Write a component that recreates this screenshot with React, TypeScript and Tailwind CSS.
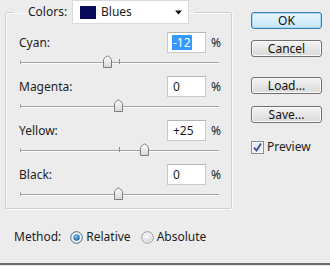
const channels = [
  { name: 'Cyan', value: '-12', pos: 107, selected: true },
  { name: 'Magenta', value: '0', pos: 118 },
  { name: 'Yellow', value: '+25', pos: 144 },
  { name: 'Black', value: '0', pos: 118 },
]

function Slider({ pos }: { pos: number }) {
  // track runs from x=20 to x=218 in the dialog, pos is the thumb centre in dialog coords
  const x = pos - 20
  return (
    <svg width="199" height="23" className="block ml-[1px]">
      <defs>
        <linearGradient id={`thumb-${pos}`} x1="0" y1="0" x2="0" y2="1">
          <stop offset="0" stopColor="#ffffff" />
          <stop offset="1" stopColor="#d6d6d6" />
        </linearGradient>
      </defs>
      <line x1="0" y1="9.5" x2="199" y2="9.5" stroke="#a3a3a3" />
      <line x1="0" y1="10.5" x2="199" y2="10.5" stroke="#fbfbfb" />
      <line x1="0.5" y1="7" x2="0.5" y2="11" stroke="#a3a3a3" />
      <line x1="99.5" y1="6" x2="99.5" y2="11" stroke="#8c8c8c" />
      <path
        d={`M${x - 3.5} 14.5 V6.5 L${x - 1} 3.5 Q${x + 0.5} 2.5 ${x + 2} 3.5 L${x + 4.5} 6.5 V14.5 Z`}
        fill={`url(#thumb-${pos})`}
        stroke="#7d7d7d"
      />
    </svg>
  )
}

function Button({ label, primary }: { label: string; primary?: boolean }) {
  return (
    <button
      className={
        primary
          ? 'w-[71px] h-[17px] rounded-[3px] border border-[#3c7fb1] bg-linear-to-b from-[#eaf6fd] to-[#c6e6f8] shadow-[inset_0_0_0_1px_#9fd8f6] text-[12px] leading-[15px] text-[#111]'
          : 'w-[71px] h-[17px] rounded-[3px] border border-[#707070] bg-linear-to-b from-[#f4f4f4] to-[#d9d9d9] shadow-[inset_0_0_0_1px_#fbfbfb] text-[12px] leading-[15px] text-[#111]'
      }
    >
      {label}
    </button>
  )
}

function Radio({ checked }: { checked?: boolean }) {
  return (
    <svg width="13" height="13" className="block">
      <defs>
        <radialGradient id={checked ? 'rOn' : 'rOff'} cx="0.4" cy="0.35" r="0.7">
          <stop offset="0" stopColor={checked ? '#7fc4ee' : '#ffffff'} />
          <stop offset="1" stopColor={checked ? '#1b5a93' : '#d2d2d2'} />
        </radialGradient>
      </defs>
      <circle cx="6.5" cy="6.5" r="5.8" fill="#f2f2f2" stroke={checked ? '#3a6d98' : '#9a9a9a'} />
      {checked ? (
        <circle cx="6.5" cy="6.5" r="3.2" fill="url(#rOn)" />
      ) : (
        <circle cx="6.5" cy="6.5" r="4.3" fill="url(#rOff)" />
      )}
    </svg>
  )
}

export default function App() {
  return (
    <div className="w-[330px] h-[266px] bg-[#ececec] flex flex-col text-[#1c1c1c] text-[12px] font-['Noto_Sans',sans-serif] overflow-hidden">
      <div className="flex-1 flex">
        {/* Left: channel group + method */}
        <div className="pl-[5px] w-[237px]">
          <fieldset className="w-[227px] border border-[#cfcfcf] shadow-[inset_1px_1px_0_#fafafa,1px_1px_0_#fafafa] rounded-[2px] p-0 m-0">
            <legend className="ml-[7px] pl-[15px] pr-[6px] flex items-center h-[24px]">
              <span className="w-[44px]">Colors:</span>
              <div className="w-[117px] h-[24px] bg-white border border-[#dadada] flex items-center pl-[7px] pr-[5px]">
                <div className="w-[16px] h-[13px] bg-[#0b0b5c]" />
                <span className="ml-[5px] flex-1">Blues</span>
                <svg width="8" height="5" className="block">
                  <path d="M0 0.5 H7 L3.5 4.5 Z" fill="#111" />
                </svg>
              </div>
            </legend>
            <div className="pl-[13px] pr-[11px] pt-[8px]">
              {channels.map((c) => (
                <div key={c.name} className="h-[44px]">
                  <div className="flex items-center h-[21px]">
                    <span className="flex-1">{c.name}:</span>
                    <div className="w-[39px] h-[21px] bg-white border border-[#c9c9c9] border-t-[#b5b5b5] flex items-center pl-[5px]">
                      {c.selected ? (
                        <span className="bg-[#3399ff] text-white leading-[15px] px-[1px] -ml-[1px]">{c.value}</span>
                      ) : (
                        <span>{c.value}</span>
                      )}
                    </div>
                    <span className="ml-[5px] w-[9px]">%</span>
                  </div>
                  <Slider pos={c.pos} />
                </div>
              ))}
            </div>
          </fieldset>
          <div className="flex items-center h-[16px] mt-[20px] pl-[9px]">
            <span>Method:</span>
            <div className="ml-[9px]">
              <Radio checked />
            </div>
            <span className="ml-[3px]">Relative</span>
            <div className="ml-[10px]">
              <Radio />
            </div>
            <span className="ml-[3px]">Absolute</span>
          </div>
        </div>

        {/* Right: buttons */}
        <div className="pl-[14px] pt-[12px] flex flex-col">
          <Button label="OK" primary />
          <div className="mt-[11px]">
            <Button label="Cancel" />
          </div>
          <div className="mt-[19px]">
            <Button label="Load..." />
          </div>
          <div className="mt-[11px]">
            <Button label="Save..." />
          </div>
          <div className="mt-[14px] flex items-center">
            <svg width="13" height="13" className="block">
              <rect x="0.5" y="0.5" width="12" height="12" fill="#f7f7f7" stroke="#8e8f8f" />
              <rect x="2.5" y="2.5" width="8" height="8" fill="#e6e9f0" />
              <path d="M3 6.5 L5.5 9.5 L10 2.5" fill="none" stroke="#3d4f90" strokeWidth="1.8" />
            </svg>
            <span className="ml-[3px]">Preview</span>
          </div>
        </div>
      </div>
      <div className="h-[2px] bg-[#6a6a6a]" />
      <div className="h-[1px] bg-[#e8e8e8]" />
    </div>
  )
}
